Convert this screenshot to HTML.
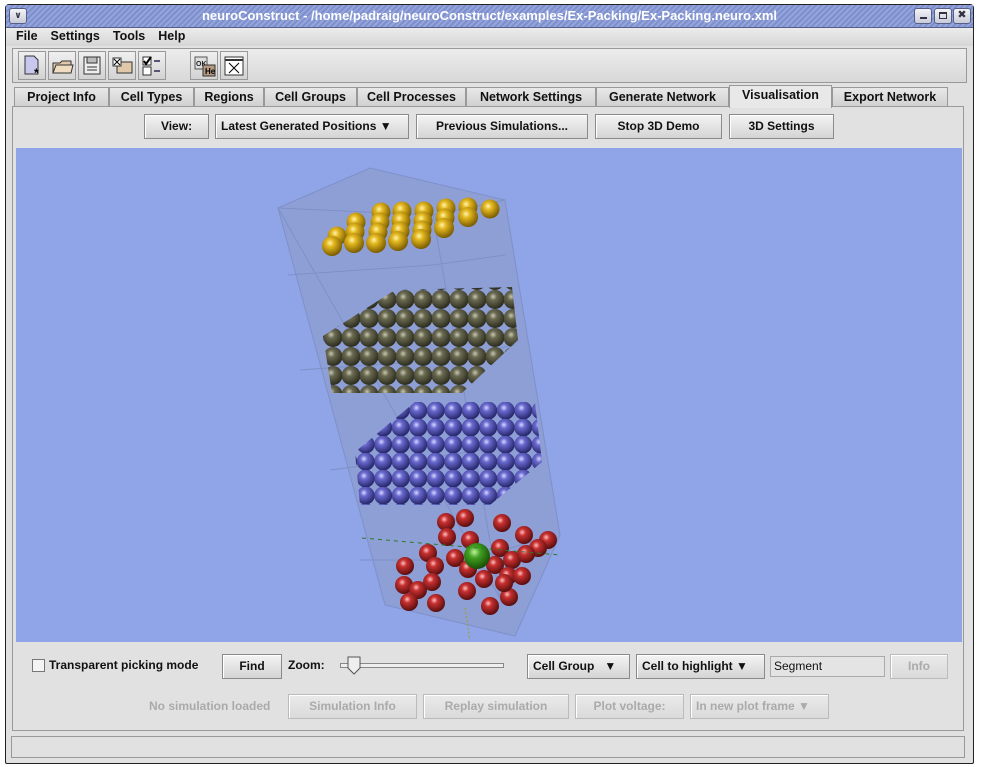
<!DOCTYPE html>
<html><head><meta charset="utf-8">
<style>
*{box-sizing:border-box;margin:0;padding:0}
body{width:982px;height:767px;background:#fff;font-family:"Liberation Sans","DejaVu Sans",sans-serif;font-size:12px;font-weight:bold;color:#111;position:relative;overflow:hidden}
.win{position:absolute;left:5px;top:4px;width:969px;height:760px;background:#e1e1e1;border:1px solid #222;border-radius:4px 4px 2px 2px}
.title{position:absolute;left:0;top:0;width:967px;height:23px;background:repeating-linear-gradient(135deg,#7e8fcc 0 2px,#94a4dc 2px 4px);border-bottom:1px solid #55608a;color:#fff;text-align:center;font-size:13px;line-height:22px}
.tb{position:absolute;top:3px;width:18px;height:16px;background:linear-gradient(#f4f4f8,#c8cad8);border:1px solid #55608a;border-radius:3px}
.abs{position:absolute}
.menu span{margin-right:13px}
.btn{position:absolute;height:25px;border:1px solid #8a8a8a;background:linear-gradient(#f4f4f4,#d4d4d4);text-align:center;line-height:23px;box-shadow:inset 1px 1px 0 #fff}
.tab{position:absolute;top:87px;height:20px;border:1px solid #999;border-bottom:none;background:linear-gradient(#e8e8e8,#cfcfcf);text-align:center;line-height:19px;font-size:12.5px}
.dis{color:#aaa;border-color:#bbb;background:linear-gradient(#eaeaea,#dadada)}
.icon{position:absolute;top:51px;width:28px;height:29px;border:1px solid #999;background:linear-gradient(#f0f0f0,#d2d2d2)}
</style></head><body>
<div class="win"></div>
<div class="abs" style="left:6px;top:5px;width:967px;height:23px;" >
 <div class="title">neuroConstruct - /home/padraig/neuroConstruct/examples/Ex-Packing/Ex-Packing.neuro.xml</div>
 <div class="tb" style="left:3px;font-size:9px;line-height:13px;text-align:center;color:#334">&#8744;</div>
 <div class="tb" style="left:908px"><div style="position:absolute;left:5px;top:8px;width:7px;height:2px;background:#334"></div></div>
 <div class="tb" style="left:928px"><div style="position:absolute;left:4px;top:3px;width:8px;height:7px;border:1px solid #334;border-top-width:2px"></div></div>
 <div class="tb" style="left:947px;font-size:11px;line-height:13px;text-align:center;color:#334">&#10006;</div>
</div>
<div class="abs menu" style="left:6px;top:28px;width:967px;height:18px;background:linear-gradient(#ececec,#d6d6d6);padding-left:10px;line-height:17px;font-size:12.5px"><span>File</span><span>Settings</span><span>Tools</span><span>Help</span></div>
<div class="abs" style="left:12px;top:48px;width:955px;height:35px;border:1px solid #999;background:linear-gradient(#ececec,#d8d8d8)"></div>
<div class="icon" style="left:18px"><svg width="26" height="27"><path d="M6 4h9l4 4v14H6z" fill="#c8c8ee" stroke="#333"/><text x="15" y="25" font-size="12" fill="#000">*</text></svg></div>
<div class="icon" style="left:48px"><svg width="26" height="27"><path d="M4 11h7l2-2h9v12H4z" fill="#e0c8a8" stroke="#333"/><path d="M4 21l3-8h17l-2 8z" fill="#f0dcc0" stroke="#333"/></svg></div>
<div class="icon" style="left:78px"><svg width="26" height="27"><rect x="5" y="5" width="16" height="17" fill="#eee" stroke="#333"/><rect x="8" y="5" width="10" height="6" fill="#bbb" stroke="#333"/><path d="M8 15h10M8 18h10" stroke="#333"/></svg></div>
<div class="icon" style="left:108px"><svg width="26" height="27"><rect x="8" y="10" width="15" height="11" fill="#e0c8a8" stroke="#333"/><rect x="4" y="6" width="8" height="8" fill="#fff" stroke="#333"/><path d="M5 7l6 6M11 7l-6 6" stroke="#000"/></svg></div>
<div class="icon" style="left:138px"><svg width="26" height="27"><rect x="4" y="5" width="8" height="8" fill="#fff" stroke="#333"/><path d="M5 9l2 3 5-7" stroke="#000" fill="none" stroke-width="2"/><rect x="4" y="15" width="8" height="8" fill="#fff" stroke="#333"/><path d="M15 9h6M15 19h6" stroke="#557" stroke-width="2"/></svg></div>
<div class="icon" style="left:190px"><svg width="26" height="27"><rect x="4" y="5" width="12" height="12" fill="#ddd" stroke="#555"/><text x="5" y="14" font-size="7" fill="#222">OK</text><rect x="12" y="13" width="12" height="11" fill="#b59a80" stroke="#333"/><text x="14" y="22" font-size="8" fill="#000">He</text></svg></div>
<div class="icon" style="left:220px"><svg width="26" height="27"><rect x="4" y="5" width="18" height="18" fill="#fff" stroke="#333"/><path d="M4 8h18" stroke="#333" stroke-width="2"/><path d="M8 11l10 10M18 11l-10 10" stroke="#000"/></svg></div>

<div class="tab" style="left:14px;width:95px">Project Info</div>
<div class="tab" style="left:109px;width:85px">Cell Types</div>
<div class="tab" style="left:194px;width:70px">Regions</div>
<div class="tab" style="left:264px;width:93px">Cell Groups</div>
<div class="tab" style="left:357px;width:109px">Cell Processes</div>
<div class="tab" style="left:466px;width:130px">Network Settings</div>
<div class="tab" style="left:596px;width:133px">Generate Network</div>
<div class="tab" style="left:729px;width:103px;top:85px;height:23px;background:#e8e8e8;z-index:2">Visualisation</div>
<div class="tab" style="left:832px;width:116px">Export Network</div>
<div class="abs" style="left:12px;top:106px;width:952px;height:625px;border:1px solid #999;background:#e1e1e1"></div>

<div class="btn" style="left:144px;top:114px;width:65px">View:</div>
<div class="btn" style="left:215px;top:114px;width:194px;text-align:left;padding-left:5px">Latest Generated Positions &#9660;</div>
<div class="btn" style="left:416px;top:114px;width:172px">Previous Simulations...</div>
<div class="btn" style="left:595px;top:114px;width:127px">Stop 3D Demo</div>
<div class="btn" style="left:729px;top:114px;width:105px">3D Settings</div>

<svg class="abs" style="left:16px;top:148px" width="946" height="494" viewBox="16 148 946 494">
<defs>
<radialGradient id="gy" cx="40%" cy="35%" r="65%"><stop offset="0" stop-color="#fff4b0"/><stop offset=".3" stop-color="#e4b820"/><stop offset="1" stop-color="#7a5c00"/></radialGradient>
<radialGradient id="gg" cx="40%" cy="35%" r="65%"><stop offset="0" stop-color="#c8c8b0"/><stop offset=".3" stop-color="#6a6a52"/><stop offset="1" stop-color="#2c2c1e"/></radialGradient>
<radialGradient id="gb" cx="40%" cy="35%" r="65%"><stop offset="0" stop-color="#d8d8ff"/><stop offset=".3" stop-color="#6a6ad0"/><stop offset="1" stop-color="#26266a"/></radialGradient>
<radialGradient id="gr" cx="40%" cy="35%" r="65%"><stop offset="0" stop-color="#ffc0c0"/><stop offset=".3" stop-color="#c83030"/><stop offset="1" stop-color="#5a0e0e"/></radialGradient>
<radialGradient id="gn" cx="40%" cy="35%" r="65%"><stop offset="0" stop-color="#c0f0a0"/><stop offset=".35" stop-color="#40a020"/><stop offset="1" stop-color="#185008"/></radialGradient>
<pattern id="pg" width="18" height="19" patternUnits="userSpaceOnUse" x="324" y="290"><circle cx="9" cy="9.5" r="9.5" fill="url(#gg)"/></pattern>
<pattern id="pb" width="17.5" height="17" patternUnits="userSpaceOnUse" x="357" y="402"><circle cx="8.7" cy="8.5" r="9" fill="url(#gb)"/></pattern>
</defs>
<rect x="16" y="148" width="946" height="494" fill="#8fa5e8"/>
<polygon points="278,208 370,168 505,200 560,535 515,636 385,605" fill="#8e9fd6" stroke="#7f90c8" stroke-width="1"/>
<polygon points="278,208 433,215 505,200 433,215 500,598" fill="none" stroke="#7f90c8"/>
<path d="M288,275 433,265 505,255 M300,370 440,360 515,345 M330,470 450,455 540,440 M360,560 470,560 555,535" stroke="#7f90c8" fill="none"/>
<polygon points="323,336 395,290 512,287 518,340 462,393 332,393" fill="url(#pg)"/>
<polygon points="355,452 415,402 535,402 542,462 490,505 360,505" fill="url(#pb)"/>
<g fill="url(#gy)">
<circle cx="337" cy="236" r="9.5"/><circle cx="332" cy="246" r="10"/>
<circle cx="356" cy="222" r="9.5"/><circle cx="355" cy="232" r="9.5"/><circle cx="354" cy="243" r="10"/>
<circle cx="381" cy="212" r="9.5"/><circle cx="380" cy="222" r="9.5"/><circle cx="378" cy="232" r="9.5"/><circle cx="376" cy="243" r="10"/>
<circle cx="402" cy="211" r="9.5"/><circle cx="401" cy="221" r="9.5"/><circle cx="400" cy="231" r="9.5"/><circle cx="398" cy="241" r="10"/>
<circle cx="424" cy="211" r="9.5"/><circle cx="423" cy="221" r="9.5"/><circle cx="422" cy="230" r="9.5"/><circle cx="421" cy="239" r="10"/>
<circle cx="446" cy="208" r="9.5"/><circle cx="445" cy="218" r="9.5"/><circle cx="444" cy="228" r="10"/>
<circle cx="468" cy="207" r="9.5"/><circle cx="468" cy="217" r="10"/>
<circle cx="490" cy="209" r="9.5"/>
</g>
<g fill="url(#gr)">
<circle cx="446" cy="522" r="9"/><circle cx="465" cy="518" r="9"/><circle cx="502" cy="523" r="9"/><circle cx="447" cy="537" r="9"/><circle cx="470" cy="540" r="9"/>
<circle cx="524" cy="535" r="9"/><circle cx="548" cy="540" r="9"/><circle cx="538" cy="548" r="9"/><circle cx="428" cy="553" r="9"/><circle cx="455" cy="558" r="9"/>
<circle cx="435" cy="566" r="9"/><circle cx="500" cy="548" r="9"/><circle cx="512" cy="560" r="9"/><circle cx="526" cy="554" r="9"/><circle cx="495" cy="565" r="9"/>
<circle cx="405" cy="566" r="9"/><circle cx="468" cy="569" r="9"/><circle cx="484" cy="579" r="9"/><circle cx="508" cy="576" r="9"/><circle cx="522" cy="576" r="9"/>
<circle cx="404" cy="585" r="9"/><circle cx="418" cy="590" r="9"/><circle cx="432" cy="582" r="9"/><circle cx="467" cy="591" r="9"/><circle cx="509" cy="597" r="9"/>
<circle cx="409" cy="602" r="9"/><circle cx="436" cy="603" r="9"/><circle cx="490" cy="606" r="9"/><circle cx="504" cy="583" r="9"/>
</g>
<circle cx="477" cy="556" r="13" fill="url(#gn)"/>
<path d="M362,538 L560,555" stroke="#2a7a2a" stroke-dasharray="4,4"/>
<path d="M465,608 L470,640" stroke="#a0a020" stroke-dasharray="2,2"/>
</svg>

<div class="abs" style="left:32px;top:659px;width:13px;height:13px;border:1px solid #777;background:#f4f4f4"></div>
<div class="abs" style="left:49px;top:658px">Transparent picking mode</div>
<div class="btn" style="left:222px;top:654px;width:60px">Find</div>
<div class="abs" style="left:288px;top:658px">Zoom:</div>
<div class="abs" style="left:340px;top:663px;width:164px;height:5px;border:1px solid #888;background:#eee"></div>
<svg class="abs" style="left:346px;top:656px" width="16" height="20"><path d="M2 1h12v11l-6 6-6-6z" fill="#eee" stroke="#555"/></svg>
<div class="btn" style="left:527px;top:654px;width:103px;text-align:left;padding-left:5px">Cell Group &nbsp;&nbsp;&#9660;</div>
<div class="btn" style="left:636px;top:654px;width:129px;text-align:left;padding-left:5px">Cell to highlight &#9660;</div>
<div class="abs" style="left:770px;top:656px;width:115px;height:21px;border:1px solid #aaa;background:#e4e4e4;font-weight:normal;padding:2px 3px">Segment</div>
<div class="btn dis" style="left:890px;top:654px;width:58px">Info</div>
<div class="abs" style="left:149px;top:699px;color:#aaa">No simulation loaded</div>
<div class="btn dis" style="left:288px;top:694px;width:129px">Simulation Info</div>
<div class="btn dis" style="left:423px;top:694px;width:146px">Replay simulation</div>
<div class="btn dis" style="left:575px;top:694px;width:109px">Plot voltage:</div>
<div class="btn dis" style="left:690px;top:694px;width:139px;text-align:left;padding-left:5px">In new plot frame &#9660;</div>
<div class="abs" style="left:11px;top:736px;width:954px;height:22px;border:1px solid #999;background:#e1e1e1"></div>
</body></html>
